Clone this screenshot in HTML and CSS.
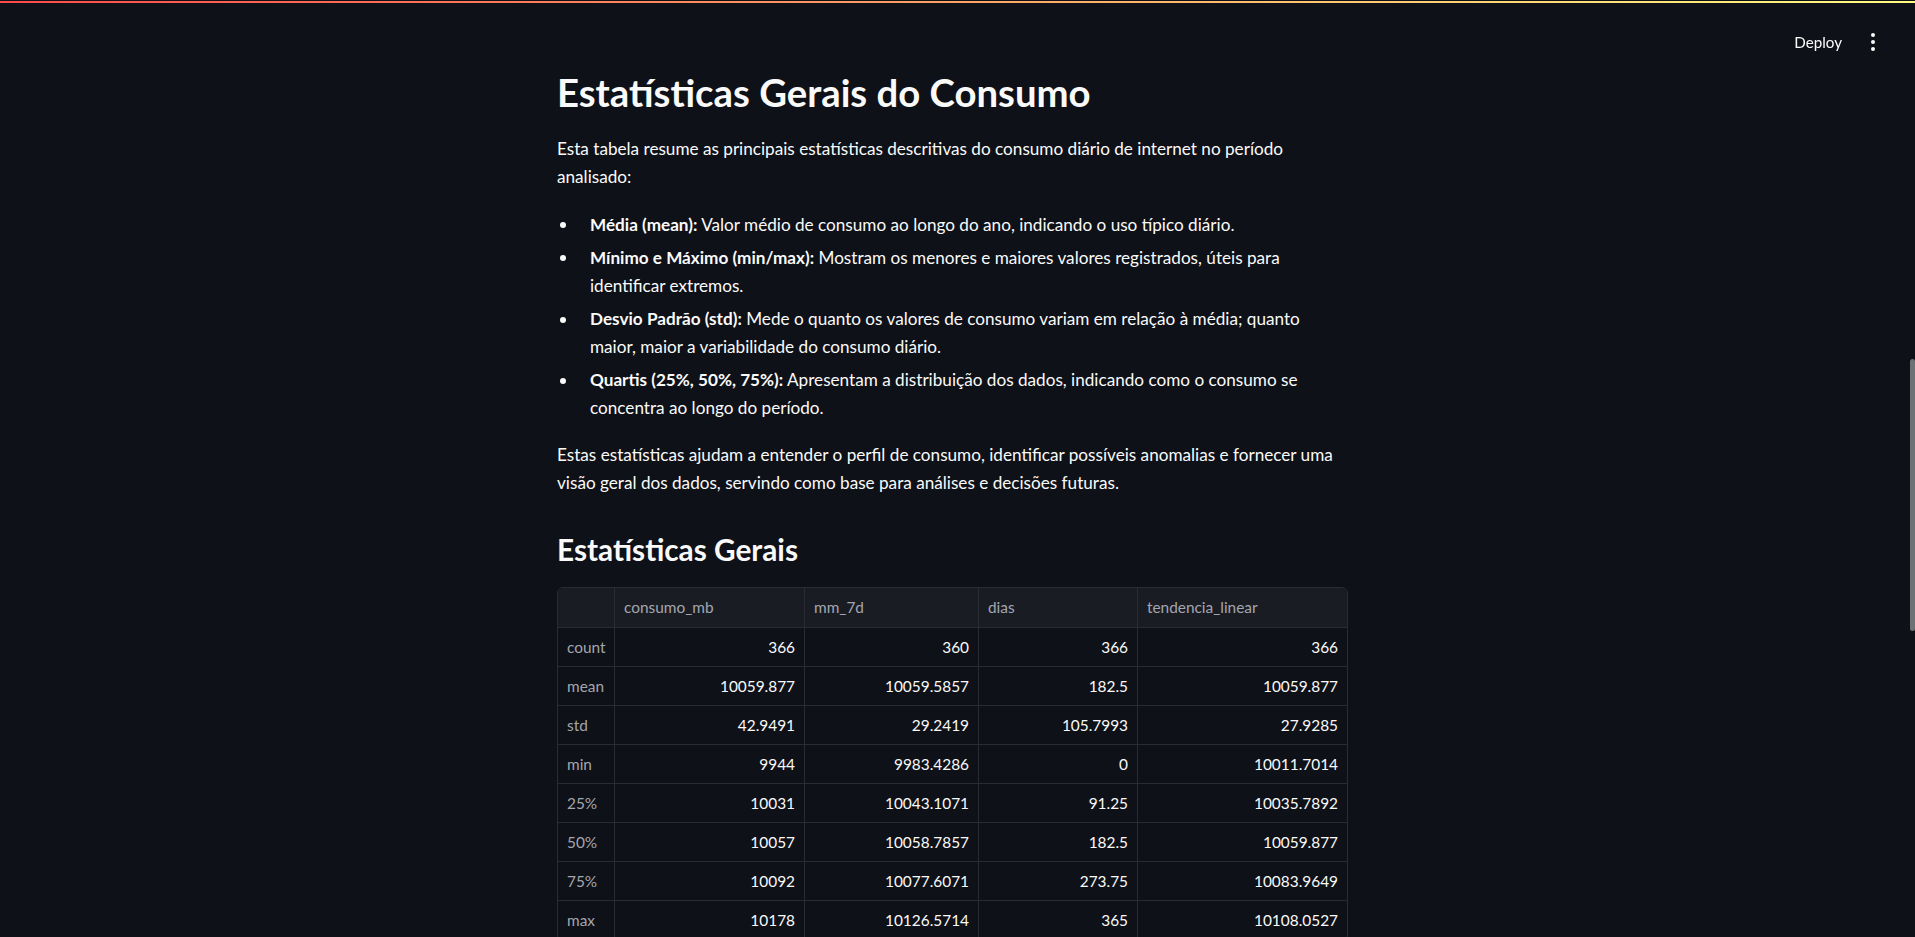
FILE: index.html
```html
<!DOCTYPE html>
<html lang="pt-BR">
<head>
<meta charset="utf-8">
<title>Estatísticas Gerais do Consumo</title>
<link rel="stylesheet" href="styles.css">
</head>
<body>
<div class="decoration"></div>
<header class="toolbar">
  <button class="deploy" type="button">Deploy</button>
  <button class="menu" type="button" aria-label="Menu">
    <svg width="4" height="18" viewBox="0 0 4 18"><circle cx="2" cy="2" r="2"/><circle cx="2" cy="9" r="2"/><circle cx="2" cy="16" r="2"/></svg>
  </button>
</header>
<div class="app">
  <main class="main">
    <div class="block">
      <h1>Estatísticas Gerais do Consumo</h1>
      <p>Esta tabela resume as principais estatísticas descritivas do consumo diário de internet no período analisado:</p>
      <ul class="bullets">
        <li><strong>Média (mean):</strong> Valor médio de consumo ao longo do ano, indicando o uso típico diário.</li>
        <li><strong>Mínimo e Máximo (min/max):</strong> Mostram os menores e maiores valores registrados, úteis para identificar extremos.</li>
        <li><strong>Desvio Padrão (std):</strong> Mede o quanto os valores de consumo variam em relação à média; quanto maior, maior a variabilidade do consumo diário.</li>
        <li><strong>Quartis (25%, 50%, 75%):</strong> Apresentam a distribuição dos dados, indicando como o consumo se concentra ao longo do período.</li>
      </ul>
      <p class="after">Estas estatísticas ajudam a entender o perfil de consumo, identificar possíveis anomalias e fornecer uma visão geral dos dados, servindo como base para análises e decisões futuras.</p>
      <h2>Estatísticas Gerais</h2>
      <div class="frame">
        <table class="grid">
          <colgroup>
            <col class="c-idx"><col class="c-a"><col class="c-b"><col class="c-c"><col class="c-d">
          </colgroup>
          <thead>
            <tr><th></th><th>consumo_mb</th><th>mm_7d</th><th>dias</th><th>tendencia_linear</th></tr>
          </thead>
          <tbody>
            <tr><td class="idx">count</td><td>366</td><td>360</td><td>366</td><td>366</td></tr>
            <tr><td class="idx">mean</td><td>10059.877</td><td>10059.5857</td><td>182.5</td><td>10059.877</td></tr>
            <tr><td class="idx">std</td><td>42.9491</td><td>29.2419</td><td>105.7993</td><td>27.9285</td></tr>
            <tr><td class="idx">min</td><td>9944</td><td>9983.4286</td><td>0</td><td>10011.7014</td></tr>
            <tr><td class="idx">25%</td><td>10031</td><td>10043.1071</td><td>91.25</td><td>10035.7892</td></tr>
            <tr><td class="idx">50%</td><td>10057</td><td>10058.7857</td><td>182.5</td><td>10059.877</td></tr>
            <tr><td class="idx">75%</td><td>10092</td><td>10077.6071</td><td>273.75</td><td>10083.9649</td></tr>
            <tr><td class="idx">max</td><td>10178</td><td>10126.5714</td><td>365</td><td>10108.0527</td></tr>
          </tbody>
        </table>
      </div>
    </div>
  </main>
  <div class="scrolltrack"><div class="thumb"></div></div>
</div>
</body>
</html>
```

FILE: styles.css
```css
html, body {
  margin: 0;
  padding: 0;
  height: 100%;
  overflow: hidden;
}
body {
  background: #0e1117;
  color: #fafafa;
  font-family: "Lato", "Noto Sans", sans-serif;
  font-size: 17.15px;
  line-height: 28px;
}
.decoration {
  position: fixed;
  top: 1px;
  left: 0;
  right: 0;
  height: 2px;
  background: linear-gradient(90deg, #ff4b4b, #fffd80);
  z-index: 5;
}
.toolbar {
  position: fixed;
  top: 24px;
  right: 30px;
  height: 36px;
  display: flex;
  align-items: center;
  gap: 11px;
  z-index: 4;
}
.deploy {
  background: transparent;
  border: none;
  color: #fafafa;
  font-family: "Lato", sans-serif;
  font-size: 15.2px;
  padding: 6px 8px;
  cursor: pointer;
}
.menu {
  width: 24px;
  height: 28px;
  background: transparent;
  border: none;
  padding: 0;
  display: flex;
  align-items: center;
  justify-content: center;
  fill: #fafafa;
}
.app {
  display: flex;
  height: 100%;
}
.main {
  flex: 1;
  display: flex;
  justify-content: center;
  overflow: hidden;
}
.block {
  width: 791px;
  padding-top: 69px;
}
h1 {
  margin: 0;
  font-size: 38.3px;
  line-height: 47.5px;
  font-weight: 700;
}
p {
  margin: 18px 0 0;
}
.bullets {
  list-style: none;
  margin: 20px 0 0;
  padding: 0;
}
.bullets li {
  position: relative;
  padding-left: 33px;
  margin-top: 5.3px;
}
.bullets li:first-child {
  margin-top: 0;
}
.bullets li::before {
  content: "";
  position: absolute;
  left: 3px;
  top: 11.5px;
  width: 6px;
  height: 6px;
  border-radius: 50%;
  background: #fafafa;
}
strong {
  font-weight: 700;
}
p.after {
  margin-top: 18.8px;
}
h2 {
  margin: 33.4px 0 0;
  font-size: 29.75px;
  line-height: 37px;
  font-weight: 700;
}
.frame {
  margin-top: 19px;
  border: 1px solid #2a2c33;
  border-radius: 6px;
  overflow: hidden;
  width: 789px;
}
.grid {
  border-collapse: separate;
  border-spacing: 0;
  table-layout: fixed;
  width: 789px;
  font-size: 15.4px;
  line-height: 20px;
}
.c-idx { width: 57px; }
.c-a { width: 190px; }
.c-b { width: 174px; }
.c-c { width: 159px; }
.c-d { width: 209px; }
.grid th,
.grid td {
  padding: 0 9px;
  border-right: 1px solid #2a2c33;
  border-bottom: 1px solid #2a2c33;
  white-space: nowrap;
  overflow: hidden;
}
.grid th:last-child,
.grid td:last-child {
  border-right: none;
}
.grid th {
  height: 39px;
  background: #1a1c24;
  color: #a3a6ae;
  font-weight: 400;
  text-align: left;
}
.grid td {
  height: 38px;
  text-align: right;
  color: #fafafa;
}
.grid td.idx {
  text-align: left;
  color: #a3a6ae;
}
.scrolltrack {
  width: 10px;
  flex: none;
  display: flex;
  flex-direction: column;
  align-items: flex-end;
}
.thumb {
  margin-top: 359px;
  width: 5px;
  height: 272px;
  background: #707175;
  border-radius: 3px;
}
```
